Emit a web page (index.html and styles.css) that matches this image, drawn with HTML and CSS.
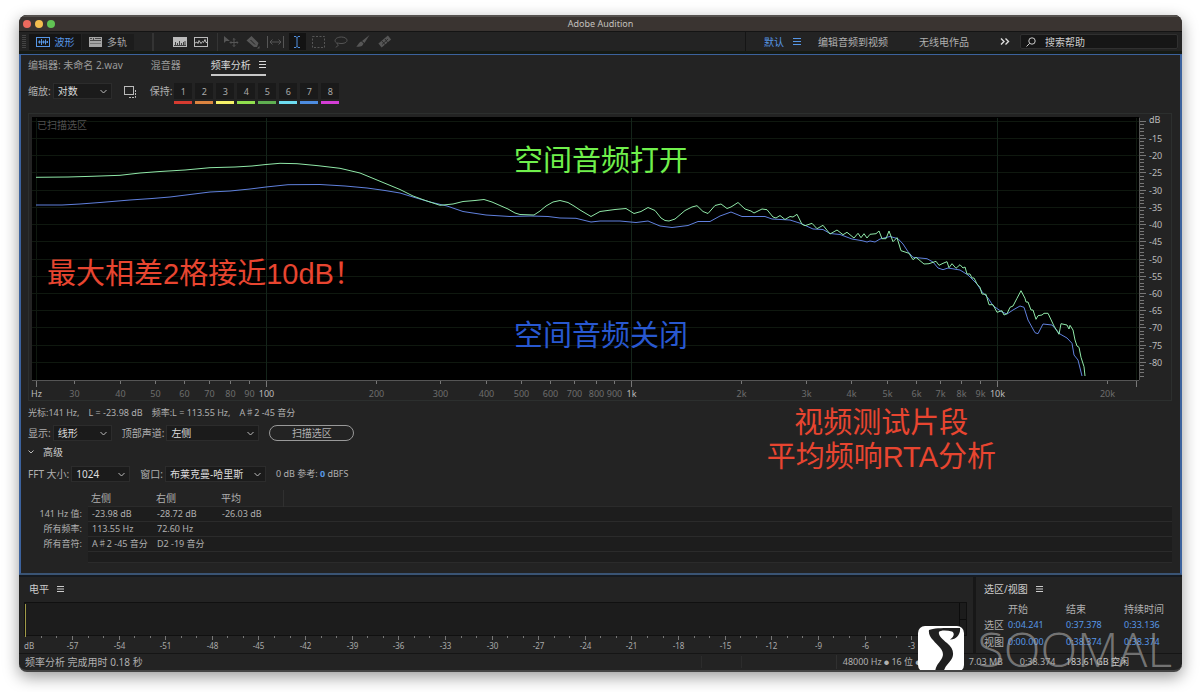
FILE: index.html
```html
<!DOCTYPE html>
<html lang="zh-CN">
<head>
<meta charset="utf-8">
<title>Adobe Audition</title>
<link rel="stylesheet" href="styles.css">
</head>
<body>
<main class="window">
  <header class="titlebar">
    <div class="lights"><i class="light close"></i><i class="light minimise"></i><i class="light zoom"></i></div>
    <h1 class="app-name">Adobe Audition</h1>
  </header>

  <nav class="toolbar">
    <i class="grip"></i>
    <div class="modes">
      <button class="mode active" type="button">
        <svg width="14" height="10" viewBox="0 0 14 10" fill="none" stroke="currentColor"><rect x=".5" y=".5" width="13" height="9"/><path d="M2 5h10M3.500 3.500v3M5.500 2v6M7.500 3.500v3M9.500 2.500v5M11.500 4v2"/></svg>波形</button>
      <button class="mode" type="button">
        <svg width="13" height="10" viewBox="0 0 13 10"><path fill="currentColor" d="M0 0h13v10H0z"/><path stroke="#222" d="M1 3.500h11M4.500 1v2M1 1.500h2M6 1.500h6" stroke-width=".7"/><path stroke="#777" d="M1 6.500h11"/></svg>多轨</button>
    </div>
    <i class="divider wide"></i>
    <div class="views">
      <button class="tool bright" type="button" aria-label="频谱频率显示"><svg width="14" height="10" viewBox="0 0 14 10"><path fill="currentColor" d="M0 0h14v10H0z"/><path stroke="#222" stroke-width=".8" d="M1 8.500h12M2.500 8V5M4.500 8V6M6.500 8V4M8.500 8V6M10.500 8V5M12 8V4"/></svg></button>
      <button class="tool bright" type="button" aria-label="频谱音调显示"><svg width="14" height="10" viewBox="0 0 14 10" fill="none" stroke="currentColor"><rect x=".5" y=".5" width="13" height="9"/><path d="M1 6l2-1 1 1.500 1-3 2 3 1.500-2 1 1 1.500-3 1 3h1"/></svg></button>
    </div>
    <i class="divider"></i>
    <div class="tools">
      <button class="tool" type="button" aria-label="移动工具"><svg width="16" height="12" viewBox="0 0 16 12"><path fill="currentColor" d="M1 0l6 5H3L1 7z"/><path fill="none" stroke="currentColor" d="M11 2.500v8M7 6.500h8M9.800 3.700 11 2.500l1.200 1.200M9.800 9.300 11 10.500l1.200-1.200M8.200 5.300 7 6.500l1.200 1.200M13.800 5.300 15 6.500l-1.200 1.200"/></svg></button>
      <button class="tool" type="button" aria-label="切断所选剪辑工具"><svg width="16" height="14" viewBox="0 0 16 14"><path fill="currentColor" d="M1.500 5.500 6.500 1l7 7-1.500 4H9zM14.500 11v2.500H12z"/><path stroke="#222" d="M5.500 5l4.500 4.500"/></svg></button>
      <button class="tool" type="button" aria-label="滑动工具"><svg width="17" height="12" viewBox="0 0 17 12" fill="none" stroke="currentColor"><path d="M.5 0v12M16.500 0v12M3 6h11M5.500 3.500 3 6l2.500 2.500M11.500 3.500 14 6l-2.500 2.500"/></svg></button>
      <button class="tool selected" type="button" aria-label="时间选择工具"><svg width="8" height="12" viewBox="0 0 8 12" fill="none" stroke="currentColor"><path d="M1 .5h2l1 1 1-1h2M4 1v10M1 11.500h2l1-1 1 1h2"/></svg></button>
      <button class="tool" type="button" aria-label="框选工具"><svg width="14" height="12" viewBox="0 0 14 12" fill="none" stroke="currentColor"><rect x=".5" y=".5" width="12" height="11" stroke-dasharray="2 1.500"/></svg></button>
      <button class="tool" type="button" aria-label="套索选择工具"><svg width="14" height="12" viewBox="0 0 14 12" fill="none" stroke="currentColor"><path d="M3.500 7.500C-1 5.500 1 1 7.500 1s8 6 .5 6.500c-3 .2-4.500-1-5-.2s1.500 1 1.200 2C4 10.500 2 10 2 11.500"/></svg></button>
      <button class="tool" type="button" aria-label="画笔选择工具"><svg width="14" height="13" viewBox="0 0 14 13" fill="currentColor"><path d="M13.500 0 8.500 8 6 6zM5.500 6.500 7.500 8.500C7 11 4 12.500 0 11.500 2 11 2.500 7 5.500 6.500z"/></svg></button>
      <button class="tool" type="button" aria-label="污点修复画笔工具"><svg width="14" height="13" viewBox="0 0 14 13"><path stroke="currentColor" stroke-width="5" d="M2 10.500 11.500 2.500"/><path stroke="#222" stroke-width=".8" d="M4 6l3.500 4M7 4l3 4M4 9.500 10 4"/></svg></button>
    </div>
    <div class="workspaces">
      <button class="workspace current" type="button">默认 <svg width="8" height="7" viewBox="0 0 8 7"><path stroke="currentColor" d="M0 .5h8M0 3.500h8M0 6.500h8"/></svg></button>
      <button class="workspace" type="button">编辑音频到视频</button>
      <button class="workspace" type="button">无线电作品</button>
      <button class="workspace" type="button" aria-label="更多"><svg width="10" height="7" viewBox="0 0 10 7" fill="none" stroke="#ddd" stroke-width="1.400"><path d="M1 .5l3 3-3 3M5.500 .5l3 3-3 3"/></svg></button>
    </div>
    <label class="search">
      <svg width="10" height="10" viewBox="0 0 10 10" fill="none" stroke="#ccc"><circle cx="6" cy="4" r="3.200"/><path d="M3.700 6.300.5 9.500"/></svg>
      <input type="text" aria-label="搜索帮助" placeholder="搜索帮助">
    </label>
  </nav>

  <section class="analysis">
    <div class="tabs">
      <button class="tab file" type="button">编辑器: 未命名 2.wav</button>
      <button class="tab mixer" type="button">混音器</button>
      <button class="tab open" type="button">频率分析 <svg width="7" height="7" viewBox="0 0 7 7"><path stroke="currentColor" d="M0 .5h7M0 3.500h7M0 6.500h7"/></svg></button>
    </div>

    <div class="controls">
      <label for="scale">缩放:</label>
      <span class="picker small"><select id="scale"><option>对数</option></select><svg width="7" height="5" viewBox="0 0 7 5"><path d="M.5 1l3 3 3-3"/></svg></span>
      <button class="copy" type="button" aria-label="复制"><svg width="13" height="12" viewBox="0 0 13 12" fill="none" stroke="#bbb"><rect x=".5" y=".5" width="9" height="8"/><path d="M11.500 4v7.500H4" stroke-dasharray="2 1"/></svg></button>
      <span class="hold-label">保持:</span>
      <div class="holds">
        <button class="hold red" type="button">1</button>
        <button class="hold orange" type="button">2</button>
        <button class="hold yellow" type="button">3</button>
        <button class="hold lime" type="button">4</button>
        <button class="hold green" type="button">5</button>
        <button class="hold cyan" type="button">6</button>
        <button class="hold blue" type="button">7</button>
        <button class="hold magenta" type="button">8</button>
      </div>
    </div>

    <svg class="chart" id="chart" viewBox="28 113 1144 288" role="img" aria-label="频率分析">
      <rect class="frame" x="28.500" y="113.500" width="1143" height="287"/>
      <rect x="32" y="117" width="1107" height="263"/>
      <g id="grid"></g>
      <path class="axis" d="M32 380.500H1139M1139.500 118V380"/>
      <text class="scanned" x="37" y="129">已扫描选区</text>
      <polyline class="curve off" points="36,205 62,205 80,204 100,202.500 130,200 152,198.500 170,197 190,194.500 210,192 230,191 250,189 266,187 288,184.700 320,184.500 345,186 367,188 385,190.500 400,193 413,197 430,202 447,206 463,211.500 486,215 510,216.500 530,216 548,216.500 560,218 576,218.300 591,222 600,221 620,221 636,222.500 648,221 660,226 672,227.500 688,225.500 698,221.500 710,221.500 720,216 731,212 742,216.500 756,216.500 765,216.500 772,219 790,220 801,223.500 813,229 823,229.500 830,233.500 840,234.500 852,239 862,240.700 867,242 870,241 875,242 880,239 890,236.500 898,238.700 903,244 908,251.700 913,257.300 927,258.700 933,262 938,268 943,269.700 948,268 960,270 968,275 977,284 982,291.700 988,298 993,305.700 1002,312 1007,314 1013,310 1020,306 1024,307.300 1028,320 1035,332.700 1038,333.700 1043,324 1052,325 1060,334 1067,338 1072,343.300 1074,355 1078,360 1082,376"/>
      <polyline class="curve on" points="36,177.300 68,177 92,176.300 120,175.300 140,173 160,171.500 185,170 210,167.700 235,167 252,166 266,164.500 280,163.300 297,163.700 318,165.700 340,168.300 360,173 377,180 400,189.500 413,196 424,200 440,205.300 453,204 463,201.500 475,200.500 484,199.500 492,202 508,209 515,213 520,214.500 534,215 540,211 546,206 553,202 560,200.500 568,202.500 574,206 580,210 591,216.500 600,211.500 615,209.500 626,208.500 634,213.500 641,211.500 648,207.500 655,210.500 661,218 665,220.500 669,221 675,219 685,210.500 692,207 697,205.700 703,211.500 708,213.500 715,205.500 721,204 727,208.500 731,207 738,202.500 745,209 751,211 754,213 762,209 767,209.700 773,217 776,218 780,215.500 785,219.500 790,216.500 793,217 797,214.300 802,224.300 805,225.700 812,223.300 817,228.700 823,225.300 830,234 837,230 843,234.700 847,232.300 854,238 858,233.300 861,237.700 864,233.700 867,238 870,234.300 876,233.700 879,231 882,238.700 886,238.700 889,231 893,241.700 897,237.700 901,250.700 909,253.300 913,259.700 916,257.300 924,264 929,263.700 936,261.300 939,265.300 943,263.300 947,261.700 949,267.700 952,263.700 956,268.300 960,264.700 963,268 965,267 967,274 970,274 972,278 974,278 977,284 980,287.300 982,294 986,294.300 989,304.700 993,304.700 997,312.300 1002,310.700 1004,315 1007,313.700 1010,307.300 1013,306 1017,298.300 1021,290.700 1025,298.300 1026,302 1028,302 1031,310 1033,310 1036,319.300 1038,315.700 1042,315 1044,313.300 1048,313.300 1054,326 1059,334.300 1061,323.700 1067,325 1069,329 1070,325.300 1073,330 1075,340 1077,346 1079,347.300 1081,357.300 1084,366.700 1085,376"/>
      <text class="note on-note" x="514" y="171">空间音频打开</text>
      <text class="note off-note" x="514" y="346">空间音频关闭</text>
      <text class="note red-note" x="47" y="284">最大相差2格接近10dB！</text>
    </svg>

    <p class="readout"><span>光标:141 Hz,</span><span>L = -23.98 dB</span><span>频率:L = 113.55 Hz,</span><span>A♯2 -45 音分</span></p>

    <div class="options">
      <label for="display">显示:</label>
      <span class="picker small"><select id="display"><option>线形</option></select><svg width="7" height="5" viewBox="0 0 7 5"><path d="M.5 1l3 3 3-3"/></svg></span>
      <label class="next" for="channel">顶部声道:</label>
      <span class="picker medium"><select id="channel"><option>左侧</option></select><svg width="7" height="5" viewBox="0 0 7 5"><path d="M.5 1l3 3 3-3"/></svg></span>
      <button class="scan" type="button">扫描选区</button>
    </div>

    <button class="advanced" type="button" aria-expanded="true"><svg width="6" height="4" viewBox="0 0 6 4"><path d="M.5 .5 3 3l2.500-2.500"/></svg>高级</button>

    <div class="options">
      <label for="fft">FFT 大小:</label>
      <span class="picker small"><select id="fft"><option>1024</option></select><svg width="7" height="5" viewBox="0 0 7 5"><path d="M.5 1l3 3 3-3"/></svg></span>
      <label class="next" for="fftwin">窗口:</label>
      <span class="picker large"><select id="fftwin"><option>布莱克曼-哈里斯</option></select><svg width="7" height="5" viewBox="0 0 7 5"><path d="M.5 1l3 3 3-3"/></svg></span>
      <span class="reference">0 dB 参考: <b>0</b> dBFS</span>
    </div>

    <table class="values">
      <thead><tr><td></td><th scope="col">左侧</th><th scope="col">右侧</th><th scope="col">平均</th><td class="rest"></td></tr></thead>
      <tbody>
        <tr><th scope="row">141 Hz 值:</th><td>-23.98 dB</td><td>-28.72 dB</td><td>-26.03 dB</td><td></td></tr>
        <tr><th scope="row">所有频率:</th><td>113.55 Hz</td><td>72.60 Hz</td><td></td><td></td></tr>
        <tr><th scope="row">所有音符:</th><td>A♯2 -45 音分</td><td>D2 -19 音分</td><td></td><td></td></tr>
        <tr class="blank"><td></td><td></td><td></td><td></td><td></td></tr>
      </tbody>
    </table>

    <p class="caption">视频测试片段<br>平均频响RTA分析</p>
  </section>

  <div class="lower">
    <section class="levels">
      <h2 class="heading">电平 <svg width="7" height="6" viewBox="0 0 7 6"><path stroke="currentColor" d="M0 .5h7M0 3h7M0 5.500h7"/></svg></h2>
      <svg class="meter" id="meter" viewBox="20 602 953 52" role="img" aria-label="电平表">
        <rect x="24.500" y="603.500" width="942" height="33"/>
        <path class="split" d="M959.500 604v32M960 620.500h6"/>
        <path class="level" d="M25.500 605v33"/>
      </svg>
    </section>
    <section class="selection">
      <h2 class="heading">选区/视图 <svg width="7" height="6" viewBox="0 0 7 6"><path stroke="currentColor" d="M0 .5h7M0 3h7M0 5.500h7"/></svg></h2>
      <table class="times">
        <thead><tr><td></td><th scope="col">开始</th><th scope="col">结束</th><th scope="col">持续时间</th></tr></thead>
        <tbody>
          <tr><th scope="row">选区</th><td>0:04.241</td><td>0:37.378</td><td>0:33.136</td></tr>
          <tr><th scope="row">视图</th><td>0:00.000</td><td>0:38.374</td><td>0:38.374</td></tr>
        </tbody>
      </table>
    </section>
  </div>

  <footer class="status">
    <span class="message">频率分析 完成用时 0.18 秒</span>
    <i class="slot"></i>
    <span class="format">48000 Hz <i class="dot">●</i> 16 位 <i class="dot">●</i> 立体声</span>
    <span class="size">7.03 MB</span>
    <span class="length">0:38.374</span>
    <span class="free">183.61 GB 空闲</span>
  </footer>

  <div class="watermark">
    <svg width="46" height="46" viewBox="0 0 46 46"><rect width="46" height="46" rx="7" fill="#fff"/><path fill="#202020" d="M11 4C17 1.500 31 2 42 2 43 8 38 14 32 13.500 36 11 37 7 34 5.500 29 4 22 4 21 6c-1 3 3 7 8 11 6 5 8 11 4 17-3 4-6 6-7.500 12H17c1-7 4-9 6.500-13 3-5 1-9-3-13C15 14 10 10 11 4z"/></svg>
    <span>SOOMAL</span>
  </div>
</main>
<script src="script.js"></script>
</body>
</html>
```
FILE: styles.css
```css
* { box-sizing: border-box; }
body {
  margin: 0;
  padding: 15px 18px 20px 19px;
  background: #fff;
  color: #b0b0b0;
  font: 10px/14px "Noto Sans", "Noto Sans CJK SC", sans-serif;
}
h1, h2, p { margin: 0; font: inherit; }
button, input, select { margin: 0; padding: 0; border: 0; background: none; color: inherit; font: inherit; appearance: none; }
button { display: inline-flex; align-items: center; justify-content: center; white-space: nowrap; }
svg { display: block; flex: none; }

.window {
  position: relative;
  display: flex;
  flex-direction: column;
  overflow: clip;
  background: #232323;
  border-radius: 8px;
  border-bottom: 2px solid #444;
  box-shadow: 0 5px 16px rgba(0, 0, 0, .4);
}
.titlebar { display: grid; grid-template-columns: 1fr auto 1fr; align-items: center; height: 17px; padding: 0 4px; background: #3a3431; border-top: 2px solid #56524f; border-bottom: 1px solid #141414; }
.lights { display: flex; gap: 4px; }
.light { width: 8px; height: 8px; border-radius: 50%; }
.close { background: #ed6a5e; }
.minimise { background: #f4be4f; }
.zoom { background: #61c454; }
.app-name { color: #c4c1bf; font-size: 9px; line-height: 12px; }

.toolbar { display: flex; align-items: center; height: 22px; padding: 0 4px 0 3px; border-bottom: 3px solid #151a14; }
.grip { width: 4px; height: 14px; margin-right: 3px; background: repeating-linear-gradient(#444 0 1px, #222 1px 2px); }
.modes { display: flex; gap: 1px; }
.mode { gap: 5px; width: 52px; height: 16px; background: #1c1c1c; color: #a5a5a5; }
.mode.active { background: #151515; color: #5797e6; }
.divider { width: 1px; height: 18px; background: #343434; }
.divider.wide { width: 2px; margin: 0 19px 0 18px; }
.views { display: flex; gap: 7px; margin-right: 9px; }
.tools { display: flex; margin-left: 2px; }
.tool { width: 22px; height: 17px; color: #565656; }
.tool.bright { width: 14px; color: #bbb; }
.tool.selected { color: #5090e0; background: linear-gradient(#131313, #131313) center / 17px 17px no-repeat; }
.workspaces { display: flex; align-items: center; height: 19px; margin-left: auto; padding-left: 18px; border-left: 1px solid #151515; }
.workspace { margin-right: 31px; }
.workspace.current { gap: 9px; margin-right: 17px; color: #5797e6; }
.workspace:last-child { margin-right: 8px; }
.search { display: flex; align-items: center; gap: 9px; width: 158px; height: 15px; margin-left: 2px; padding-left: 5px; background: #161616; border: 1px solid #303030; border-radius: 2px; }
.search input { flex: 1; min-width: 0; height: 13px; outline: 0; }
.search input::placeholder { color: #ccc; opacity: 1; }

.analysis { position: relative; display: flex; flex-direction: column; padding: 0 8px 10px 7px; border: 1px solid #3c629d; border-left-width: 2px; border-right-width: 2px; border-bottom: 2px solid #3a5474; }
.tabs { display: flex; align-items: flex-start; height: 28px; color: #999; }
.tab { height: 21px; border-bottom: 2px solid transparent; }
.file { margin-right: 28px; }
.mixer { margin-right: 30px; }
.tab.open { gap: 8px; color: #d8d8d8; border-color: #c8c8c8; }
.controls { display: flex; height: 30px; line-height: 17px; }
.picker { display: grid; align-items: center; height: 16px; margin-left: 2px; background: #1b1b1b; border: 1px solid #2c2c2c; }
.picker > * { grid-area: 1 / 1; }
.picker select { width: 100%; height: 14px; padding: 0 16px 0 4px; color: #ddd; line-height: 14px; }
.picker svg { justify-self: end; margin-right: 4px; fill: none; stroke: #bbb; pointer-events: none; }
.small { width: 59px; }
.medium { width: 93px; }
.large { width: 101px; }
.copy { height: 17px; margin: 0 13px 0 12px; }
.holds { display: flex; gap: 3px; margin-left: 2px; }
.hold { width: 18px; height: 21px; padding-bottom: 1px; background: linear-gradient(#1a1a1a, #1a1a1a) top / 100% 16px no-repeat; border-bottom: 3px solid; font-size: 9px; }
.analysis .hold { -webkit-text-fill-color: #aaa; }
.red { border-color: #d63b30; }
.orange { border-color: #dc8440; }
.yellow { border-color: #f6f168; }
.lime { border-color: #91df4e; }
.green { border-color: #5faf51; }
.cyan { border-color: #6ddcf0; }
.blue { border-color: #4d8ce0; }
.magenta { border-color: #d43dd6; }

.chart { width: 100%; height: auto; }
.chart text { fill: #6d6d6d; font-size: 9px; }
.chart .major { fill: #bbb; }
.chart .scanned { fill: #4f4f4f; font-size: 10px; }
.frame { fill: none; stroke: #2c2f2e; }
.gridline { stroke: #0f180f; }
.gridline.strong { stroke: #14241a; }
.axis, .tick { stroke: #777; fill: none; }
.axis { stroke: #555; }
.curve { fill: none; stroke-width: 1; }
.curve.off { stroke: #6080dd; }
.curve.on { stroke: #90e8a8; }
.chart .note { font: 400 29px "Liberation Sans", "Noto Sans CJK SC", sans-serif; }
.chart .on-note { fill: #70f04c; }
.chart .off-note { fill: #2858d0; }
.chart .red-note { fill: #e84530; }

.readout { display: flex; gap: 9px; margin: 5px 0; font-size: 9px; }
.options { display: flex; align-items: center; height: 16px; }
.next { margin-left: 10px; }
.scan { width: 85px; height: 16px; margin-left: 10px; border: 1px solid #999; border-radius: 8px; }
.advanced { align-self: flex-start; gap: 9px; height: 14px; margin: 4px 0 7px; color: #ccc; }
.advanced svg { fill: none; stroke: #bbb; }
.reference { margin-left: 10px; font-size: 9px; }
.reference b { color: #5797e6; }

.values { width: 100%; margin-top: 8px; table-layout: fixed; border-collapse: collapse; font-size: 9px; line-height: 14px; }
.values td, .values th { height: 15px; padding: 0 0 0 4px; font-weight: 400; text-align: left; white-space: nowrap; }
.values thead > tr > * { width: 65px; height: 16px; padding-left: 3px; font-size: 10px; }
.values thead > tr > :first-child { width: 60px; }
.values thead > tr > .rest { width: auto; border-left: 1px solid #303030; }
.values tbody td { background: #1d1d1d; border-top: 1px solid #2b2b2b; border-bottom: 1px solid #2b2b2b; }
.values tbody th { padding: 0 6px 0 0; text-align: right; }
.values tbody .blank td { height: 11px; }
.values tbody .blank td:first-child { background: none; border: 0; }
.caption { position: absolute; right: 184px; top: 351px; color: #e84530; font: 400 29px/34px "Liberation Sans", "Noto Sans CJK SC", sans-serif; text-align: center; }

.lower { display: flex; border-top: 2px solid #151a20; border-bottom: 1px solid #151515; }
.levels { flex: 1; padding-left: 1px; border-right: 3px solid #171717; }
.heading { display: flex; align-items: center; gap: 8px; height: 24px; color: #ccc; }
.levels .heading { padding-left: 9px; }
.meter { width: 100%; height: auto; }
.meter rect { fill: #1c1c1c; stroke: #101010; }
.meter text { fill: #aaa; font-size: 8px; }
.split { fill: none; stroke: #0c0c0c; }
.level { stroke: #a09a48; }
.selection { flex: 0 0 206px; padding-left: 8px; }
.times { border-collapse: collapse; line-height: 14px; }
.times td, .times th { height: 17px; padding: 0; font-weight: 400; text-align: left; white-space: nowrap; }
.times thead > tr > * { width: 58px; height: 16px; }
.times thead > tr > :first-child { width: 24px; }
.times tbody td { color: #5797e6; font-size: 9px; }

.status { display: flex; align-items: center; height: 16px; padding: 0 53px 0 6px; }
.slot { width: 41px; height: 12px; margin: 0 94px 0 auto; border: solid #2c2c2c; border-width: 0 1px; }
.format { width: 133px; padding-left: 6px; border-left: 1px solid #303030; white-space: nowrap; font-size: 9px; }
.dot { font-size: 5px; font-style: normal; vertical-align: 1px; }
.size, .length, .free { font-size: 9px; white-space: nowrap; }
.size { width: 51px; }
.length { width: 46px; }
.free { color: #ccc; }

.watermark { position: absolute; right: 10px; bottom: -2px; display: flex; align-items: center; gap: 14px; pointer-events: none; }
.watermark span { color: rgba(170, 170, 170, .62); font: 300 48px/46px "Open Sans", Lato, sans-serif; }
```
FILE: script.js
```javascript
const NS = "http://www.w3.org/2000/svg";

function add(parent, name, attrs, text) {
  const el = document.createElementNS(NS, name);
  for (const key in attrs) el.setAttribute(key, attrs[key]);
  if (text) el.textContent = text;
  parent.appendChild(el);
}

const grid = document.getElementById("grid");
const crisp = (n) => Math.floor(n) + 0.5;
const freqX = (hz) => 266 + 365.6 * (Math.log10(hz) - 2);
const levelY = (db) => 138.5 - 3.443 * (db + 15);

// Decibel scale, a tick for each dB and a label for every fifth
for (let db = -10; db >= -84; db--) {
  const y = crisp(levelY(db));
  const fifth = db % 5 === 0;
  if (fifth) add(grid, "path", { class: "gridline", d: `M32 ${y}H1139` });
  add(grid, "path", { class: "tick", d: `M1140 ${y}h${fifth ? 6 : 4}` });
  if (fifth && db < -10) add(grid, "text", { class: "major", x: 1149, y: y + 3 }, String(db));
}
add(grid, "text", { class: "major", x: 1149, y: 123 }, "dB");

// Logarithmic frequency scale
const steps = [30, 40, 50, 60, 70, 80, 90, 100, 200, 300, 400, 500, 600, 700, 800, 900,
  1000, 2000, 3000, 4000, 5000, 6000, 7000, 8000, 9000, 10000, 20000];
for (const hz of steps) {
  const x = crisp(freqX(hz));
  const decade = hz === 100 || hz === 1000 || hz === 10000;
  if (decade) add(grid, "path", { class: "gridline strong", d: `M${x} 118V380` });
  add(grid, "path", { class: "tick", d: `M${x} 380v${decade ? 7 : 4}` });
  add(grid, "text", { class: decade ? "major" : "", x, y: 397, "text-anchor": "middle" },
    hz >= 1000 ? hz / 1000 + "k" : String(hz));
}
for (const x of [36.5, 1136.5]) {
  add(grid, "path", { class: "gridline", d: `M${x} 118V380` });
  add(grid, "path", { class: "tick", d: `M${x} 380v7` });
}
add(grid, "text", { class: "major", x: 31, y: 397 }, "Hz");

// Level meter scale
const meter = document.getElementById("meter");
for (let db = -59; db <= -2; db++) {
  const x = crisp(72.5 + (db + 57) * 15.54);
  const third = db % 3 === 0;
  add(meter, "path", { class: "tick", d: `M${x} 637v${third ? 4 : 2}` });
  if (third) add(meter, "text", { x, y: 650, "text-anchor": "middle" }, String(db));
}
add(meter, "text", { x: 24, y: 650 }, "dB");
```
